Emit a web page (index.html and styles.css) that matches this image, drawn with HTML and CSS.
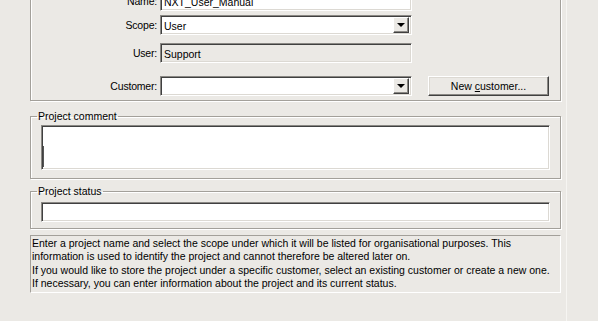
FILE: index.html
```html
<html>
  <head>
    <title>Project properties</title>
    <link rel="stylesheet" href="styles.css">
  </head>
  <body>
    <div class="dialog">
      <div class="panel">
        <div class="group">
          <div class="row row-name">
            <span class="label">Name:</span>
            <div class="field">NXT_User_Manual</div>
          </div>
          <div class="row row-scope">
            <span class="label">Scope:</span>
            <div class="field combo">
              <span class="combo-text">User</span>
              <span class="combo-btn"><span class="arrow"></span></span>
            </div>
          </div>
          <div class="row row-user">
            <span class="label">User:</span>
            <div class="field readonly">Support</div>
          </div>
          <div class="row row-customer">
            <span class="label">Customer:</span>
            <div class="field combo">
              <span class="combo-text"></span>
              <span class="combo-btn"><span class="arrow"></span></span>
            </div>
            <div class="button">New <u>c</u>ustomer...</div>
          </div>
        </div>
        <fieldset class="box box-comment">
          <legend>Project comment</legend>
          <div class="field memo"><span class="caret"></span></div>
        </fieldset>
        <fieldset class="box box-status">
          <legend>Project status</legend>
          <div class="field"></div>
        </fieldset>
        <div class="info">
          Enter a project name and select the scope under which it will be listed for organisational purposes. This<br>
          information is used to identify the project and cannot therefore be altered later on.<br>
          If you would like to store the project under a specific customer, select an existing customer or create a new one.<br>
          If necessary, you can enter information about the project and its current status.
        </div>
      </div>
    </div>
  </body>
</html>
```

FILE: styles.css
```css
body {
  margin: 0;
  background-color: #ebe9e5;
  color: #000;
  font-family: "Liberation Sans", Arial, sans-serif;
  font-size: 10.5px;
}
.dialog {
  display: flex;
  height: 321px;
  overflow: hidden;
}
.panel {
  width: 531px;
  padding: 0 5px 0 30px;
  border-right: 1px solid #f6f5f2;
}
.group {
  padding-bottom: 4px;
  border: 1px solid #a3a09a;
  border-top: none;
  box-shadow: inset 1px 0 0 #fff, 1px 1px 0 #fff;
}
.row {
  display: flex;
  align-items: center;
  height: 20px;
}
.row-name {
  margin-top: -9px;
}
.row-scope {
  margin-top: 4px;
}
.row-user {
  margin-top: 8px;
}
.row-customer {
  margin-top: 13px;
}
.label {
  width: 126px;
  margin-right: 3px;
  text-align: right;
  letter-spacing: -0.2px;
}
.field {
  box-sizing: border-box;
  width: 252px;
  height: 20px;
  padding: 1px 3px 0;
  line-height: 18px;
  background-color: #fff;
  border: 1px solid;
  border-color: #8a8884 #fff #fff #8a8884;
  box-shadow: inset 1px 1px 0 #404040, inset -1px -1px 0 #dcd9d3;
  white-space: nowrap;
  overflow: hidden;
}
.readonly {
  background-color: #ebe9e5;
}
.combo {
  display: flex;
  padding: 2px 2px 2px 3px;
  line-height: 16px;
}
.combo-text {
  flex: 1;
}
.combo-btn {
  display: flex;
  align-items: center;
  justify-content: center;
  box-sizing: border-box;
  width: 16px;
  height: 16px;
  margin-top: -1px;
  background-color: #ebe9e5;
  border: 1px solid;
  border-color: #fff #404040 #404040 #fff;
  box-shadow: inset -1px -1px 0 #8a8884;
}
.arrow {
  width: 0;
  height: 0;
  border-left: 4px solid transparent;
  border-right: 4px solid transparent;
  border-top: 4px solid #000;
}
.button {
  box-sizing: border-box;
  width: 121px;
  height: 20px;
  margin-left: 16px;
  line-height: 18px;
  text-align: center;
  border: 1px solid;
  border-color: #fff #404040 #404040 #fff;
  box-shadow: inset -1px -1px 0 #8a8884, inset 1px 1px 0 #dcd9d3;
}
.box {
  box-sizing: border-box;
  width: 531px;
  min-width: 0;
  margin: 9px 0 0;
  padding: 2px 10px 8px;
  border: 1px solid #a3a09a;
  box-shadow: inset 1px 1px 0 #fff, 1px 1px 0 #fff;
}
.box legend {
  margin-left: -4px;
  padding: 0 1px;
  line-height: 13px;
}
.box .field {
  width: 509px;
}
.box-comment {
  margin-top: 9px;
}
.box-status {
  margin-top: 6px;
  padding-top: 4px;
  padding-bottom: 6px;
}
.memo {
  display: flex;
  align-items: flex-end;
  height: 45px;
  padding: 0 0 2px 1px;
}
.caret {
  width: 1px;
  height: 21px;
  background-color: #555;
}
.info {
  margin-top: 6px;
  padding: 1px 0 1px 1px;
  line-height: 13.4px;
  border: 1px solid;
  border-color: #a3a09a #fff #fff #a3a09a;
  white-space: nowrap;
}
```
